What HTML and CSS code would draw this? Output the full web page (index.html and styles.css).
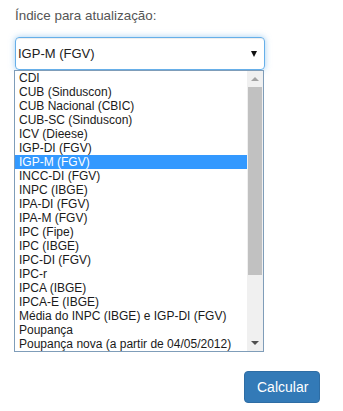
FILE: index.html
```html
<!DOCTYPE html>
<html lang="pt-BR">
<head>
  <meta charset="UTF-8" />
  <title>Índice para atualização</title>
  <link rel="stylesheet" href="styles.css">
</head>
<body>
  <div class="form">
    <label class="field-label">Índice para atualização:</label>

    <div class="select-wrap">
      <div class="select-box">
        <span class="select-value">IGP-M (FGV)</span>
        <span class="select-arrow"></span>
      </div>

      <!-- lista aberta do select -->
      <div class="dropdown">
        <ul class="options">
          <li>CDI</li>
          <li>CUB (Sinduscon)</li>
          <li>CUB Nacional (CBIC)</li>
          <li>CUB-SC (Sinduscon)</li>
          <li>ICV (Dieese)</li>
          <li>IGP-DI (FGV)</li>
          <li class="selected">IGP-M (FGV)</li>
          <li>INCC-DI (FGV)</li>
          <li>INPC (IBGE)</li>
          <li>IPA-DI (FGV)</li>
          <li>IPA-M (FGV)</li>
          <li>IPC (Fipe)</li>
          <li>IPC (IBGE)</li>
          <li>IPC-DI (FGV)</li>
          <li>IPC-r</li>
          <li>IPCA (IBGE)</li>
          <li>IPCA-E (IBGE)</li>
          <li>Média do INPC (IBGE) e IGP-DI (FGV)</li>
          <li>Poupança</li>
          <li>Poupança nova (a partir de 04/05/2012)</li>
        </ul>
        <div class="scrollbar">
          <span class="sb-btn sb-up"></span>
          <span class="sb-track">
            <span class="sb-thumb"></span>
          </span>
          <span class="sb-btn sb-down"></span>
        </div>
      </div>
    </div>

    <div class="actions">
      <button class="btn">Calcular</button>
    </div>
  </div>
</body>
</html>
```

FILE: styles.css
```css
body {
  margin: 0;
  background: #fff;
  font-family: "Liberation Sans", Arial, sans-serif;
  color: #333;
}

.form {
  padding: 6px 0 0 15px;
  width: 306px;
}

.field-label {
  display: block;
  font-size: 13.4px;
  line-height: 20px;
  color: #555;
  margin-bottom: 11px;
}

.select-wrap {
  position: relative;
  width: 250px;
}

.select-box {
  box-sizing: border-box;
  height: 33px;
  display: flex;
  align-items: center;
  justify-content: space-between;
  padding: 0 7px 0 2px;
  border: 1px solid #66afe9;
  border-radius: 4px;
  box-shadow: inset 0 1px 1px rgba(0, 0, 0, 0.075), 0 0 6px rgba(102, 175, 233, 0.6);
  font-size: 13px;
  color: #222;
}

.select-arrow {
  width: 0;
  height: 0;
  border-left: 3.5px solid transparent;
  border-right: 3.5px solid transparent;
  border-top: 6px solid #111;
  margin-top: 1px;
}

.dropdown {
  position: absolute;
  top: 33px;
  left: -1px;
  box-sizing: border-box;
  width: 250px;
  display: flex;
  border: 1px solid #7f9db9;
  background: #fff;
  z-index: 2;
}

.options {
  list-style: none;
  margin: 0;
  padding: 0;
  flex: 1;
}

.options li {
  height: 14px;
  line-height: 14px;
  padding-left: 4px;
  font-size: 12px;
  color: #1a1a1a;
  white-space: nowrap;
}

.options li.selected {
  background: #3399ff;
  color: #fff;
}

.scrollbar {
  width: 16px;
  display: flex;
  flex-direction: column;
  background: #f0f0f0;
}

.sb-btn {
  height: 16px;
  display: flex;
  align-items: center;
  justify-content: center;
}

.sb-btn::before {
  content: "";
  width: 0;
  height: 0;
  border-left: 4px solid transparent;
  border-right: 4px solid transparent;
}

.sb-up::before {
  border-bottom: 4px solid #a3a3a3;
}

.sb-down::before {
  border-top: 4px solid #505050;
}

.sb-track {
  flex: 1;
  padding: 0 1px;
}

.sb-thumb {
  display: block;
  height: 188px;
  background: #c1c1c1;
}

.actions {
  display: flex;
  justify-content: flex-end;
  margin-top: 301px;
  padding-right: 1px;
}

.btn {
  font-family: "Liberation Sans", Arial, sans-serif;
  font-size: 14px;
  color: #fff;
  background: #337ab7;
  border: 1px solid #2e6da4;
  border-radius: 4px;
  padding: 0 12px;
  height: 32px;
  width: 76px;
}
```
